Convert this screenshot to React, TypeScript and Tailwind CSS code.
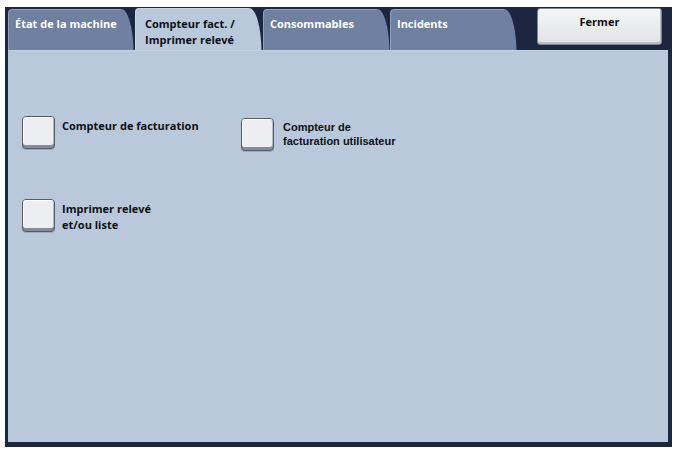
import React from "react";

const TabShape = ({ fill, w, h }: { fill: string; w: number; h: number }) => (
  <svg
    className="absolute inset-0"
    width={w}
    height={h}
    viewBox={`0 0 ${w} ${h}`}
    aria-hidden="true"
  >
    <path
      d={`M0,${h} V4 Q0,0 4,0 H${w - 13} C${w - 6},0 ${w - 1},${h * 0.45} ${w - 0.5},${h} Z`}
      fill={fill}
    />
    <path
      d={`M0.5,${h} V4 Q0.5,0.5 4,0.5 H${w - 13}`}
      fill="none"
      stroke="rgba(255,255,255,0.25)"
      strokeWidth="1"
    />
  </svg>
);

const Tab = ({
  label,
  active,
  w,
}: {
  label: React.ReactNode;
  active?: boolean;
  w: number;
}) => {
  const h = active ? 42 : 41;
  return (
    <div
      className={`relative shrink-0 ${active ? "h-[42px]" : "h-[41px] mt-[1px]"}`}
      style={{ width: w }}
    >
      <TabShape fill={active ? "#b9c9db" : "#6f80a1"} w={w} h={h} />
      <div
        className={`relative ${active ? "pt-[8px] pl-[10px] text-[#0d0f14]" : "pt-[7px] pl-[7px] text-white"} text-[11px] font-bold leading-[16px] font-['Open_Sans',sans-serif]`}
      >
        {label}
      </div>
    </div>
  );
};

const Square = () => (
  <div className="w-[33px] h-[33px] shrink-0 rounded-[4px] border border-[#555c66] bg-[#868c95] shadow-[0_1px_0_rgba(0,0,0,0.15)]">
    <div className="w-full h-[calc(100%-3px)] rounded-[3px] bg-[#eceef1] border-t border-l border-white border-r border-r-[#b5b9be]" />
  </div>
);

export default function App() {
  return (
    <div className="w-[676px] h-[451px] bg-white pt-[7px] pl-[5px]">
      <div className="w-[667px] h-[440px] bg-[#1c2641] flex flex-col pl-[3px] pr-[4px] pb-[5px] pt-[1px]">
        <div className="flex h-[42px] items-start shrink-0">
          <Tab w={126} label="État de la machine" />
          <div className="w-[1px] shrink-0" />
          <Tab
            w={127}
            active
            label={
              <>
                <div>Compteur fact. /</div>
                <div>Imprimer relevé</div>
              </>
            }
          />
          <div className="w-[1px] shrink-0" />
          <Tab w={127} label="Consommables" />
          <Tab w={127} label="Incidents" />
          <div className="ml-auto mr-[6px] w-[125px] h-[37px] rounded-[3px] border border-[#7e858f] bg-gradient-to-b from-[#f4f5f6] to-[#e0e3e7] shadow-[inset_-1px_-2px_0_#b8bdc4] flex justify-center pt-[5px]">
            <span className="text-[11px] font-bold leading-[16px] text-[#0d0f14] font-['Open_Sans',sans-serif]">
              Fermer
            </span>
          </div>
        </div>
        <div className="flex-1 bg-[#b9c9db] border-t border-t-[#c3d1e0] pt-[65px] pl-[14px] flex">
          <div className="w-[219px] flex flex-col gap-[50px]">
            <div className="flex gap-[7px]">
              <Square />
              <div className="mt-[2px] text-[11px] font-bold leading-[16px] text-[#0d0f14] font-['Open_Sans',sans-serif]">
                Compteur de facturation
              </div>
            </div>
            <div className="flex gap-[7px]">
              <Square />
              <div className="mt-[2px] text-[11px] font-bold leading-[16px] text-[#0d0f14] font-['Open_Sans',sans-serif]">
                <div>Imprimer relevé</div>
                <div>et/ou liste</div>
              </div>
            </div>
          </div>
          <div className="mt-[2px] flex gap-[9px]">
            <Square />
            <div className="mt-[2px] text-[11px] font-bold leading-[14px] text-[#0d0f14] font-['Liberation_Sans',Arial,sans-serif]">
              <div>Compteur de</div>
              <div>facturation utilisateur</div>
            </div>
          </div>
        </div>
      </div>
    </div>
  );
}
